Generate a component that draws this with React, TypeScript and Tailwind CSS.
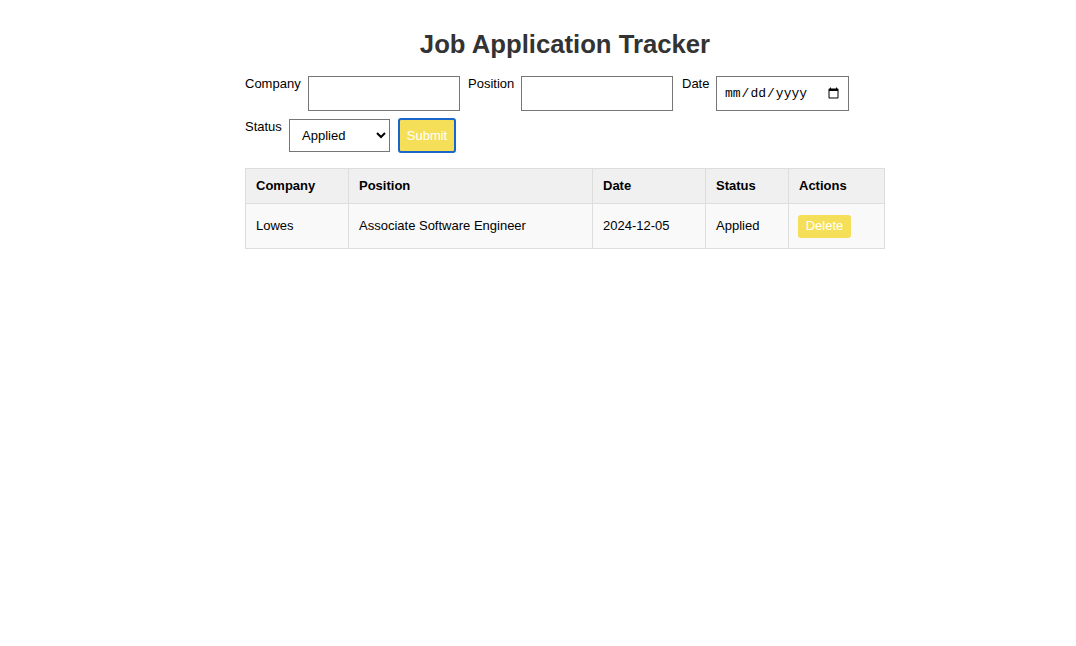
import React from "react";

export default function App() {
  const font = { fontFamily: '"Liberation Sans", Arial, sans-serif' };
  return (
    <div className="min-h-[646px] w-full bg-white flex justify-center pl-[54px]" style={font}>
      <div className="w-[640px] flex flex-col">
        <h1 className="text-[25.7px] font-bold text-[#333] text-center mt-[29px] leading-[30px]">
          Job Application Tracker
        </h1>
        <form className="mt-[17px] flex flex-wrap items-start gap-x-2 gap-y-[7px] text-[13px] text-black">
          <label className="w-[55px] whitespace-nowrap leading-[15px]">Company</label>
          <input type="text" className="w-[152px] h-[35px] border border-[#767676] bg-white px-2" />
          <label className="w-[45px] whitespace-nowrap leading-[15px]">Position</label>
          <input type="text" className="w-[152px] h-[35px] border border-[#767676] bg-white px-2" />
          <label className="w-[26px] whitespace-nowrap leading-[15px] ml-[1px]">Date</label>
          <input type="date" className="w-[133px] h-[35px] border border-[#767676] bg-white pl-[7px] pr-[6px] font-mono text-[13px]" />
          <label className="w-[36px] whitespace-nowrap pt-[1px] leading-[15px]">Status</label>
          <select defaultValue="Applied" className="w-[101px] h-[33px] mt-[1px] border border-[#767676] bg-white pl-[8px] text-[13px]">
            <option>Applied</option>
            <option>Interviewing</option>
            <option>Offer</option>
            <option>Rejected</option>
          </select>
          <button type="button" className="w-[58px] h-[35px] rounded-[3px] border-2 border-[#1a67c9] bg-[#f5df58] text-white text-[13px]">
            Submit
          </button>
        </form>
        <table className="mt-[15px] w-[640px] border-collapse text-[13px] text-black">
          <thead>
            <tr className="bg-[#f0f0f0]">
              <th className="w-[103px] border border-[#dddddd] px-[10px] h-[35px] text-left font-bold">Company</th>
              <th className="w-[244px] border border-[#dddddd] px-[10px] h-[35px] text-left font-bold">Position</th>
              <th className="w-[113px] border border-[#dddddd] px-[10px] h-[35px] text-left font-bold">Date</th>
              <th className="w-[83px] border border-[#dddddd] px-[10px] h-[35px] text-left font-bold">Status</th>
              <th className="border border-[#dddddd] px-[10px] h-[35px] text-left font-bold">Actions</th>
            </tr>
          </thead>
          <tbody>
            <tr className="bg-[#f9f9f9]">
              <td className="border border-[#dddddd] px-[10px] h-[45px]">Lowes</td>
              <td className="border border-[#dddddd] px-[10px] h-[45px]">Associate Software Engineer</td>
              <td className="border border-[#dddddd] px-[10px] h-[45px]">2024-12-05</td>
              <td className="border border-[#dddddd] px-[10px] h-[45px]">Applied</td>
              <td className="border border-[#dddddd] pl-[9px] pr-[10px] h-[45px]">
                <button type="button" className="h-[23px] w-[53px] rounded-[3px] bg-[#f5df58] text-white text-[13px] align-middle">
                  Delete
                </button>
              </td>
            </tr>
          </tbody>
        </table>
      </div>
    </div>
  );
}
